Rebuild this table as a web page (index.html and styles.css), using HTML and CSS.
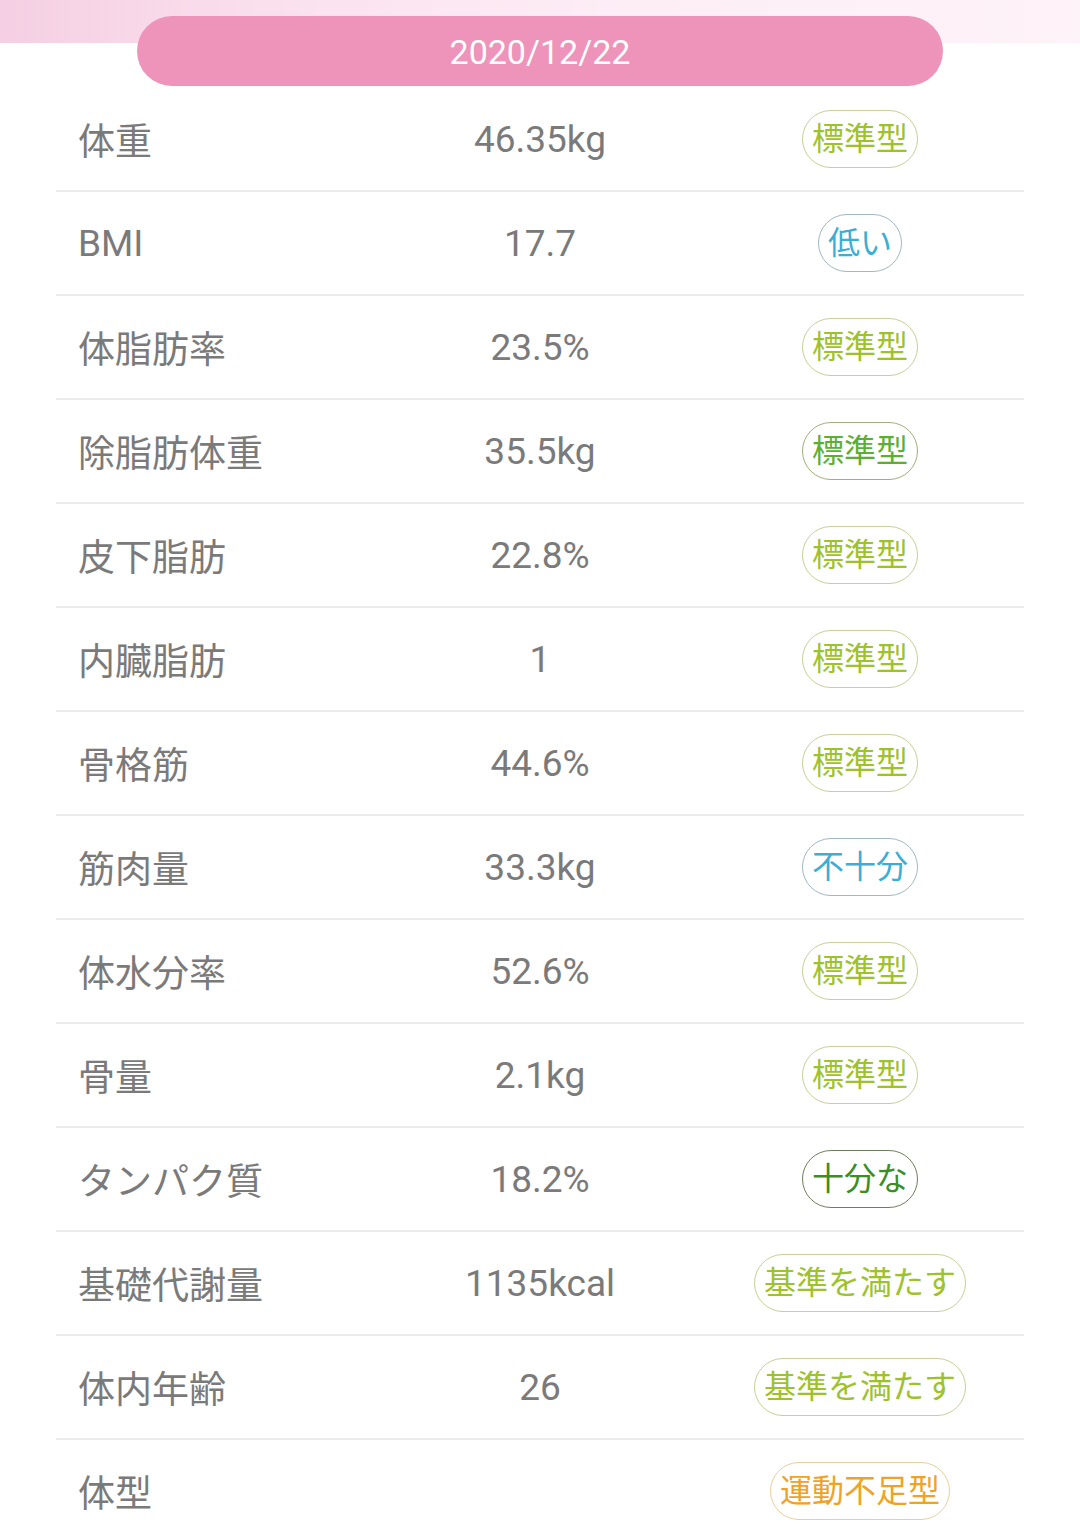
FILE: index.html
```html
<!DOCTYPE html>
<html lang="ja">
<head>
    <meta charset="UTF-8">
    <meta name="viewport" content="width=device-width, initial-scale=1.0">
    <title>体組成</title>
    <link rel="stylesheet" href="styles.css">
</head>
<body>
    <div class="header">
        <div class="date-pill">2020/12/22</div>
    </div>

    <div class="table">
        <div class="row">
            <div class="label">体重</div>
            <div class="value">46.35kg</div>
            <div class="status"><span class="badge lime">標準型</span></div>
        </div>
        <div class="row">
            <div class="label">BMI</div>
            <div class="value">17.7</div>
            <div class="status"><span class="badge blue">低い</span></div>
        </div>
        <div class="row">
            <div class="label">体脂肪率</div>
            <div class="value">23.5%</div>
            <div class="status"><span class="badge lime">標準型</span></div>
        </div>
        <div class="row">
            <div class="label">除脂肪体重</div>
            <div class="value">35.5kg</div>
            <div class="status"><span class="badge green">標準型</span></div>
        </div>
        <div class="row">
            <div class="label">皮下脂肪</div>
            <div class="value">22.8%</div>
            <div class="status"><span class="badge lime">標準型</span></div>
        </div>
        <div class="row">
            <div class="label">内臓脂肪</div>
            <div class="value">1</div>
            <div class="status"><span class="badge lime">標準型</span></div>
        </div>
        <div class="row">
            <div class="label">骨格筋</div>
            <div class="value">44.6%</div>
            <div class="status"><span class="badge lime">標準型</span></div>
        </div>
        <div class="row">
            <div class="label">筋肉量</div>
            <div class="value">33.3kg</div>
            <div class="status"><span class="badge blue">不十分</span></div>
        </div>
        <div class="row">
            <div class="label">体水分率</div>
            <div class="value">52.6%</div>
            <div class="status"><span class="badge lime">標準型</span></div>
        </div>
        <div class="row">
            <div class="label">骨量</div>
            <div class="value">2.1kg</div>
            <div class="status"><span class="badge lime">標準型</span></div>
        </div>
        <div class="row">
            <div class="label">タンパク質</div>
            <div class="value">18.2%</div>
            <div class="status"><span class="badge dark">十分な</span></div>
        </div>
        <div class="row">
            <div class="label">基礎代謝量</div>
            <div class="value">1135kcal</div>
            <div class="status"><span class="badge lime">基準を満たす</span></div>
        </div>
        <div class="row">
            <div class="label">体内年齢</div>
            <div class="value">26</div>
            <div class="status"><span class="badge lime">基準を満たす</span></div>
        </div>
        <div class="row">
            <div class="label">体型</div>
            <div class="value"></div>
            <div class="status"><span class="badge orange">運動不足型</span></div>
        </div>
    </div>
</body>
</html>
```

FILE: styles.css
```css
body {
    margin: 0;
    background: #fff;
    font-family: Roboto, "Noto Sans CJK JP", sans-serif;
    color: #7a7a7a;
}
.header {
    position: relative;
    height: 88px;
    background: linear-gradient(to bottom, transparent 43px, #fff 43px),
                linear-gradient(to right, #f5cfe3 0%, #fbe3ef 30%, #fdeef6 60%, #fef3f8 100%);
}
.date-pill {
    position: absolute;
    left: 137px;
    top: 16px;
    width: 806px;
    height: 70px;
    border-radius: 35px;
    background: #ee93b9;
    color: #fff;
    font-size: 34px;
    line-height: 72px;
    text-align: center;
}
.table {
    margin: 0 56px;
}
.row {
    display: grid;
    grid-template-columns: 322px 324px 316px;
    align-items: center;
    height: 102px;
    border-bottom: 2px solid #ececec;
}
.label {
    padding-left: 22px;
    font-size: 37px;
}
.value {
    text-align: center;
    font-size: 37px;
}
.status {
    text-align: center;
}
.badge {
    display: inline-block;
    height: 56px;
    line-height: 56px;
    padding: 0 9px;
    border: 1px solid;
    border-radius: 30px;
    font-size: 32px;
}
.lime {
    color: #9ec22c;
    border-color: #c9cf96;
}
.green {
    color: #5caf34;
    border-color: #9fb07a;
}
.blue {
    color: #3caed3;
    border-color: #9fb9bf;
}
.dark {
    color: #3c8e24;
    border-color: #6e7e5a;
}
.orange {
    color: #efa326;
    border-color: #e8cf9c;
}
```
